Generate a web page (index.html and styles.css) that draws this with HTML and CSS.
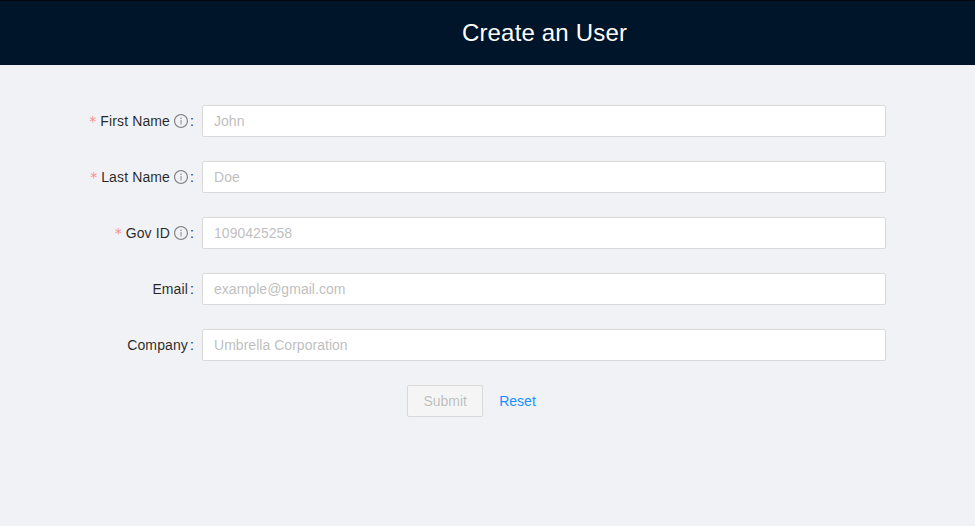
FILE: index.html
```html
<!DOCTYPE html>
<html lang="en">
<head>
<meta charset="utf-8">
<title>Create an User</title>
<link rel="stylesheet" href="styles.css">
</head>
<body>
<header class="header"><h1 class="title">Create an User</h1></header>
<main class="content">
<form class="form">
  <div class="row">
    <label class="label"><span class="req">*</span>First Name<svg class="info" viewBox="64 64 896 896"><path d="M512 64C264.6 64 64 264.6 64 512s200.6 448 448 448 448-200.6 448-448S759.4 64 512 64zm0 820c-205.4 0-372-166.6-372-372s166.6-372 372-372 372 166.6 372 372-166.6 372-372 372z"/><path d="M464 336a48 48 0 1 0 96 0 48 48 0 1 0-96 0zm72 112h-48c-4.4 0-8 3.6-8 8v272c0 4.4 3.6 8 8 8h48c4.4 0 8-3.6 8-8V456c0-4.4-3.6-8-8-8z"/></svg><span class="colon">:</span></label>
    <input class="input" placeholder="John">
  </div>
  <div class="row">
    <label class="label"><span class="req">*</span>Last Name<svg class="info" viewBox="64 64 896 896"><path d="M512 64C264.6 64 64 264.6 64 512s200.6 448 448 448 448-200.6 448-448S759.4 64 512 64zm0 820c-205.4 0-372-166.6-372-372s166.6-372 372-372 372 166.6 372 372-166.6 372-372 372z"/><path d="M464 336a48 48 0 1 0 96 0 48 48 0 1 0-96 0zm72 112h-48c-4.4 0-8 3.6-8 8v272c0 4.4 3.6 8 8 8h48c4.4 0 8-3.6 8-8V456c0-4.4-3.6-8-8-8z"/></svg><span class="colon">:</span></label>
    <input class="input" placeholder="Doe">
  </div>
  <div class="row">
    <label class="label"><span class="req">*</span>Gov ID<svg class="info" viewBox="64 64 896 896"><path d="M512 64C264.6 64 64 264.6 64 512s200.6 448 448 448 448-200.6 448-448S759.4 64 512 64zm0 820c-205.4 0-372-166.6-372-372s166.6-372 372-372 372 166.6 372 372-166.6 372-372 372z"/><path d="M464 336a48 48 0 1 0 96 0 48 48 0 1 0-96 0zm72 112h-48c-4.4 0-8 3.6-8 8v272c0 4.4 3.6 8 8 8h48c4.4 0 8-3.6 8-8V456c0-4.4-3.6-8-8-8z"/></svg><span class="colon">:</span></label>
    <input class="input" placeholder="1090425258">
  </div>
  <div class="row">
    <label class="label">Email<span class="colon">:</span></label>
    <input class="input" placeholder="example@gmail.com">
  </div>
  <div class="row">
    <label class="label">Company<span class="colon">:</span></label>
    <input class="input" placeholder="Umbrella Corporation">
  </div>
  <div class="actions">
    <button class="submit" type="button" disabled>Submit</button>
    <button class="reset" type="reset">Reset</button>
  </div>
</form>
</main>
</body>
</html>
```
FILE: styles.css
```css
* { box-sizing: border-box; }
html, body { margin: 0; height: 100%; }
body {
  background: #f0f2f5;
  font-family: "Liberation Sans", Arial, sans-serif;
  font-size: 14px;
  color: rgba(0,0,0,.85);
  overflow: hidden;
}
.header {
  height: 65px;
  background: #001529;
  display: flex;
  align-items: center;
  justify-content: center;
  padding-left: 114px;
  border-top: 1px solid #00060c;
}
.title { margin: 0; color: #fff; font-size: 24px; font-weight: 400; letter-spacing: .17px; }
.content { padding: 40px 89px 0 0; }
.form { display: flex; flex-direction: column; gap: 24px; }
.row { display: flex; height: 32px; align-items: center; }
.label {
  width: 202px;
  display: flex;
  align-items: center;
  justify-content: flex-end;
  white-space: nowrap;
  letter-spacing: .12px;
  color: rgba(0,0,0,.85);
}
.req { color: #ff8a88; font-family: "DejaVu Sans", sans-serif; line-height: 1; margin-right: 4px; letter-spacing: 0; }
.info { width: 14px; height: 14px; margin-left: 4px; fill: rgba(0,0,0,.45); }
.colon { margin: 0 8px 0 2px; }
.input {
  flex: 1;
  height: 32px;
  padding: 4px 11px;
  border: 1px solid #d9d9d9;
  border-radius: 2px;
  background: #fff;
  font: inherit;
  letter-spacing: .03px;
  outline: none;
}
.input::placeholder { color: #bfbfbf; opacity: 1; }
.actions { display: flex; justify-content: center; gap: 8px; padding-left: 65px; }
.submit {
  width: 76px; height: 32px;
  border: 1px solid #d9d9d9;
  border-radius: 2px;
  background: #f5f5f5;
  color: rgba(0,0,0,.25);
  font: inherit;
}
.reset {
  height: 32px; padding: 0 8px;
  border: 0; background: transparent;
  color: #1890ff;
  font: inherit;
}
```
